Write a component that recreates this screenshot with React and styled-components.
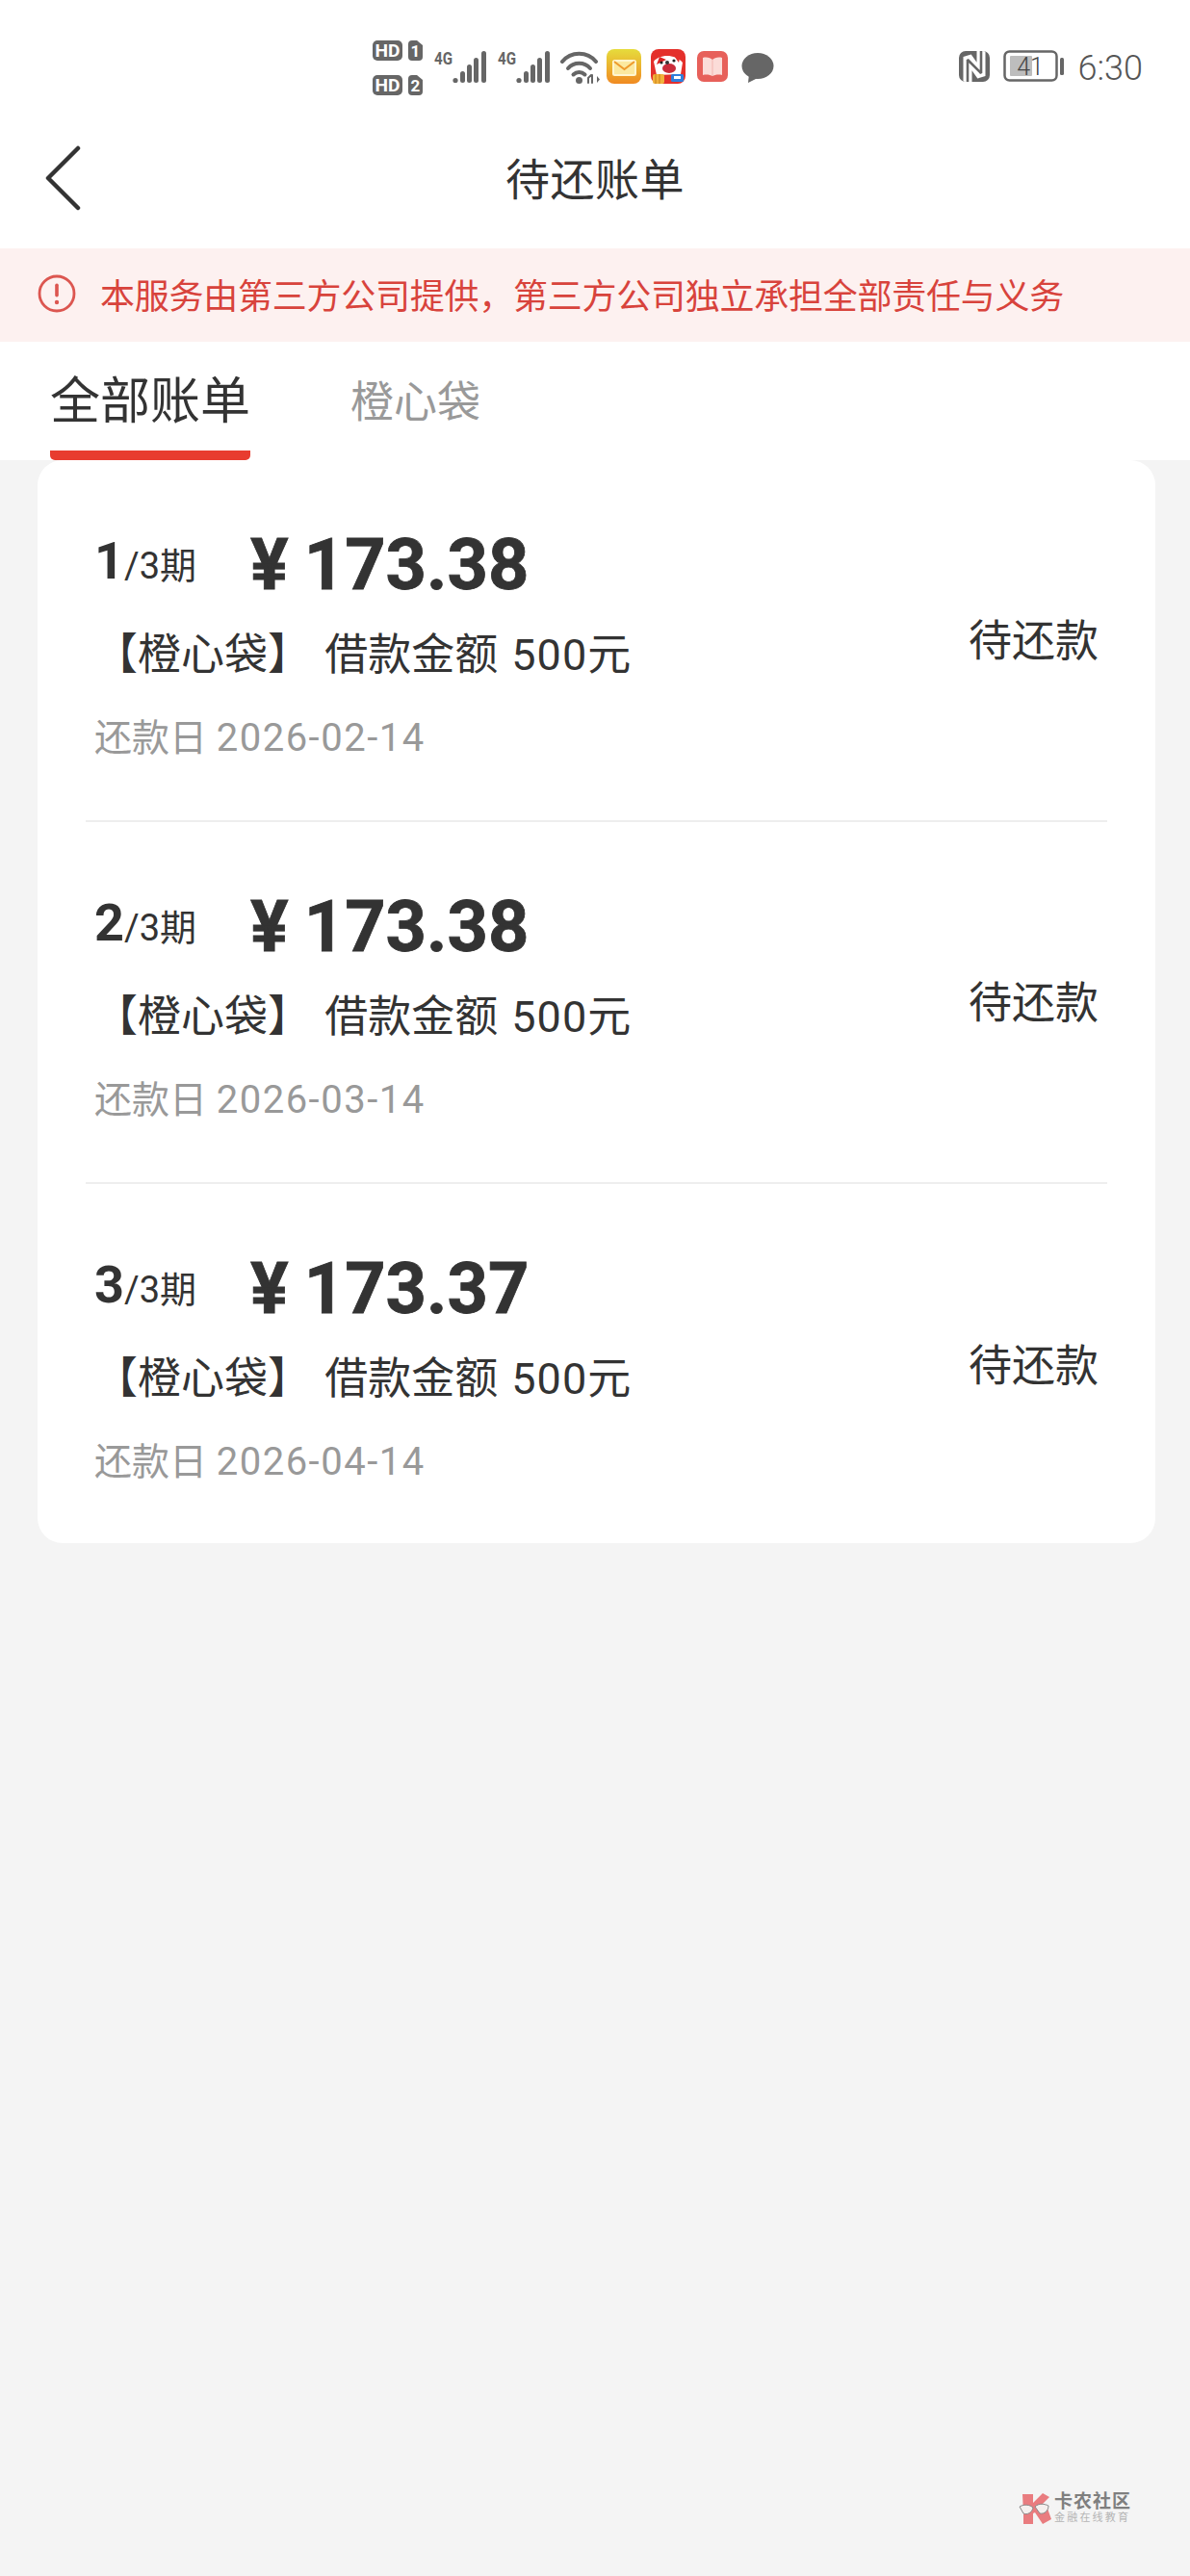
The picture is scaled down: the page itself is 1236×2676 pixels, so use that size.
import React from "react";
import styled, { createGlobalStyle } from "styled-components";

const Global = createGlobalStyle`
  html, body { margin: 0; padding: 0; background: #f4f4f4; }
  #root { min-height: 2676px; }
  * { box-sizing: border-box; }
`;

const FONT = `Roboto, "Noto Sans CJK SC", sans-serif`;

const Page = styled.div`
  position: relative;
  width: 1236px;
  height: 2676px;
  background: #f4f4f4;
  font-family: ${FONT};
  color: #333;
  overflow: hidden;
`;

const StatusBar = styled.div`
  height: 125px;
  background: #fff;
  display: flex;
  align-items: flex-start;
  padding: 42px 49px 0 387px;
`;
const StatusIcons = styled.div`
  display: flex;
  align-items: flex-start;
  flex: 1;
`;
const StatusRight = styled.div`
  display: flex;
  align-items: flex-start;
`;
const Slot = styled.div`
  flex: none;
  margin-left: ${(p) => p.$ml || 0}px;
  margin-top: ${(p) => p.$mt || 0}px;
  line-height: 0;
`;
const Clock = styled.div`
  margin-left: 15px;
  margin-top: 8px;
  font-size: 36px;
  line-height: 42px;
  font-weight: 300;
  color: #555;
`;

const Nav = styled.div`
  height: 133px;
  background: #fff;
  display: flex;
  align-items: center;
  justify-content: center;
  position: relative;
`;
const Back = styled.div`
  position: absolute;
  left: 47px;
  top: 26px;
  line-height: 0;
`;
const Title = styled.div`
  font-size: 46px;
  line-height: 60px;
  letter-spacing: 0.5px;
  margin-top: -9px;
  color: #333;
`;

const Banner = styled.div`
  height: 97px;
  background: #fdf1f0;
  display: flex;
  align-items: center;
  padding: 0 0 3px 39px;
  color: #d8433c;
  font-size: 36px;
  letter-spacing: -0.25px;
  gap: 25px;
`;
const BannerIcon = styled.div`
  line-height: 0;
  flex: none;
`;

const Tabs = styled.div`
  height: 123px;
  background: #fff;
  display: flex;
  align-items: flex-start;
  padding-left: 52px;
`;
const Tab = styled.div`
  height: 123px;
  width: ${(p) => (p.$active ? "208px" : "auto")};
  margin-left: ${(p) => (p.$active ? 0 : "104px")};
  padding-top: ${(p) => (p.$active ? "28px" : "34px")};
  font-size: ${(p) => (p.$active ? "52px" : "45px")};
  line-height: ${(p) => (p.$active ? "70px" : "60px")};
  color: ${(p) => (p.$active ? "#333" : "#999")};
  border-bottom: ${(p) => (p.$active ? "10px solid #e83c2f" : "none")};
  border-radius: 0 0 5px 5px;
  white-space: nowrap;
`;

const Card = styled.div`
  margin: 0 36px 0 39px;
  background: #fff;
  border-radius: 26px;
  padding: 0 50px;
  height: 1125px;
`;
const Row = styled.div`
  height: 376px;
  display: flex;
  align-items: center;
  justify-content: space-between;
  padding: 0 9px 0 9px;
  border-bottom: ${(p) => (p.$last ? "none" : "2px solid #eeeeee")};
`;
const Info = styled.div`
  display: flex;
  flex-direction: column;
  height: 100%;
  padding-top: 72px;
`;
const AmountLine = styled.div`
  display: flex;
  align-items: center;
  height: 74px;
`;
const Period = styled.div`
  display: flex;
  align-items: baseline;
  width: 162px;
  line-height: 60px;
  margin-top: -3px;
`;
const PeriodNo = styled.span`
  font-size: 54px;
  font-weight: 700;
`;
const PeriodOf = styled.span`
  font-size: 38px;
  white-space: nowrap;
`;
const Money = styled.div`
  display: flex;
  align-items: baseline;
  line-height: 74px;
  font-size: 74px;
  font-weight: 700;
  -webkit-text-stroke: 0.8px #333;
`;
const Yen = styled.span`
  margin-right: 16px;
`;
const NameLine = styled.div`
  margin-top: 27px;
  height: 60px;
  line-height: 60px;
  font-size: 45px;
  word-spacing: 3px;
  white-space: nowrap;
`;
const Num = styled.span`
  letter-spacing: 1px;
`;
const DateLine = styled.div`
  margin-top: 31px;
  height: 50px;
  line-height: 50px;
  font-size: 39px;
  color: #999;
  white-space: nowrap;
`;
const DateValue = styled.span`
  font-size: 40px;
  letter-spacing: 1.5px;
`;
const State = styled.div`
  font-size: 45px;
  line-height: 60px;
  margin-top: 4px;
  color: #333;
  white-space: nowrap;
`;

const Watermark = styled.div`
  position: absolute;
  left: 1058px;
  top: 2588px;
  display: flex;
  align-items: center;
  gap: 3px;
  opacity: 0.85;
`;
const MarkText = styled.div`
  display: flex;
  flex-direction: column;
  color: #6b6b6b;
`;
const MarkTitle = styled.div`
  font-size: 19px;
  line-height: 21px;
  font-weight: 700;
  letter-spacing: 1px;
  white-space: nowrap;
`;
const MarkSub = styled.div`
  font-size: 11px;
  line-height: 14px;
  letter-spacing: 2.2px;
  color: #aaa;
  white-space: nowrap;
`;

const GREY = "#666";

const Sim = ({ n }) => (
  <svg width="52" height="21" viewBox="0 0 52 21">
    <rect x="0" y="0" width="31" height="21" rx="5" fill={GREY} />
    <text x="2.5" y="17" fontFamily="Roboto" fontWeight="700" fontSize="19" fill="#fff" textLength="26" lengthAdjust="spacingAndGlyphs">HD</text>
    <path d="M37 4 a4 4 0 0 1 4 -4 H46 L52 5 V17 a4 4 0 0 1 -4 4 H41 a4 4 0 0 1 -4 -4 Z" fill={GREY} />
    <text x="44.5" y="17" textAnchor="middle" fontFamily="Roboto" fontWeight="700" fontSize="17" fill="#fff">{n}</text>
  </svg>
);

const Signal = () => (
  <svg width="54" height="40" viewBox="0 -5 54 40">
    <text x="0" y="15" fontFamily="Roboto" fontWeight="700" fontSize="19" fill={GREY} textLength="19" lengthAdjust="spacingAndGlyphs">4G</text>
    <circle cx="22" cy="31.5" r="2.6" fill={GREY} />
    <rect x="27" y="22" width="5" height="12" rx="2.5" fill={GREY} />
    <rect x="34" y="15" width="5" height="19" rx="2.5" fill={GREY} />
    <rect x="41" y="8" width="5" height="26" rx="2.5" fill={GREY} />
    <rect x="49" y="1" width="5" height="33" rx="2.5" fill={GREY} />
  </svg>
);

const Wifi = () => (
  <svg width="42" height="36" viewBox="0 0 42 36" fill="none" stroke={GREY} strokeWidth="4" strokeLinecap="round">
    <path d="M2 12 C11 1 28 1 37 12" />
    <path d="M8 19 C14 12 25 12 31 19" />
    <path d="M13.5 25.5 C17 22 22 22 25.5 25.5" />
    <circle cx="19.5" cy="31.5" r="3.5" fill={GREY} stroke="none" />
    <path d="M29 34 L29 29 L32 26 M33 26 V34" strokeWidth="2" />
    <path d="M38 27 L41 30.5 L38 34 Z" fill={GREY} stroke="none" />
  </svg>
);

const MailApp = () => (
  <svg width="36" height="36" viewBox="0 0 36 36">
    <defs>
      <linearGradient id="mailg" x1="0" y1="0" x2="0" y2="1">
        <stop offset="0" stopColor="#e6dc3c" />
        <stop offset="1" stopColor="#f08a22" />
      </linearGradient>
    </defs>
    <rect width="36" height="36" rx="8" fill="url(#mailg)" />
    <rect x="7" y="12" width="23" height="15" rx="1.5" fill="#fbe9a0" stroke="#fff6d0" strokeWidth="2" />
    <path d="M8 13 L18.5 21 L29 13" fill="none" stroke="#ee9a2c" strokeWidth="2" />
  </svg>
);

const JdApp = () => (
  <svg width="36" height="36" viewBox="0 0 36 36">
    <rect width="36" height="36" rx="8" fill="#e4302b" />
    <path d="M3 13 C8 6 24 4 33 14 L31 26 L6 27 Z" fill="#fff" />
    <path d="M9 8 L16 11 L6 16 Z" fill="#d22" />
    <path d="M24 7 L31 5 L29 14 Z" fill="#e4302b" />
    <ellipse cx="19" cy="20" rx="7" ry="5" fill="#c92c3a" />
    <circle cx="11" cy="14" r="1.6" fill="#222" />
    <circle cx="24" cy="12" r="1.6" fill="#222" />
    <circle cx="17" cy="14" r="2" fill="#333" />
    <rect x="2" y="26" width="12" height="10" rx="2" fill="#f1b23c" />
    <path d="M5 26 V36 M9 26 V36" stroke="#c77e1a" strokeWidth="1" />
    <rect x="21" y="26" width="13" height="8" rx="1.5" fill="#2f7fdc" />
    <rect x="24" y="28" width="7" height="3" fill="#fff" />
  </svg>
);

const BookApp = () => (
  <svg width="32" height="32" viewBox="0 0 32 32">
    <rect width="32" height="32" rx="7" fill="#e7605a" />
    <path d="M6 7 C10 6 14 7 16 9 C18 7 22 6 26 7 V25 C22 24 18 25 16 26 C14 25 10 24 6 25 Z" fill="#fbdcd8" />
    <path d="M16 9 V26" stroke="#f3b5af" strokeWidth="1" />
  </svg>
);

const Bubble = () => (
  <svg width="34" height="31" viewBox="0 0 34 31">
    <ellipse cx="17" cy="13.5" rx="16.5" ry="13.5" fill={GREY} />
    <path d="M8 22 L7 31 L17 26 Z" fill={GREY} />
  </svg>
);

const Nfc = () => (
  <svg width="32" height="32" viewBox="0 0 32 32">
    <defs>
      <clipPath id="nfcclip"><rect width="32" height="32" rx="7" /></clipPath>
    </defs>
    <g clipPath="url(#nfcclip)">
      <rect width="32" height="32" fill={GREY} />
      <path d="M9 34 V6 L23 26 V-2" fill="none" stroke="#fff" strokeWidth="9" strokeLinejoin="bevel" />
      <path d="M9 32 V9 L23 23 V0" fill="none" stroke={GREY} strokeWidth="2.6" strokeLinejoin="bevel" />
    </g>
  </svg>
);

const Battery = () => (
  <svg width="63" height="34" viewBox="0 0 63 34">
    <rect x="1.5" y="1.5" width="54" height="30" rx="5" fill="none" stroke={GREY} strokeWidth="2.5" />
    <rect x="7" y="6" width="23" height="21" rx="1" fill="#bdbdbd" />
    <rect x="59" y="8" width="4" height="18" rx="1.5" fill={GREY} />
    <text x="28" y="26" textAnchor="middle" fontFamily="Roboto" fontWeight="300" fontSize="25" fill="#444">41</text>
  </svg>
);

const Chevron = () => (
  <svg width="38" height="68" viewBox="0 0 38 68" fill="none" stroke="#333" strokeWidth="4.5" strokeLinecap="round" strokeLinejoin="round">
    <path d="M34 3 L3 34 L34 65" />
  </svg>
);

const Alert = () => (
  <svg width="40" height="40" viewBox="0 0 40 40">
    <circle cx="20" cy="20" r="18" fill="none" stroke="#dc5650" strokeWidth="2.8" />
    <rect x="18.2" y="9.5" width="3.6" height="14" rx="1.8" fill="#dc5650" />
    <circle cx="20" cy="29" r="2.2" fill="#dc5650" />
  </svg>
);

const Mark = () => (
  <svg width="34" height="34" viewBox="0 0 34 34">
    <path d="M4 2 H15 V11 L25 1 L32 5 L24 13 L30 17 L34 28 L25 33 L17 21 L15 22 V33 H5 V22 Z" fill="#e8686b" />
    <path d="M1 15 C6 12 12 13 15 16 C14 21 9 24 5 22 Z" fill="#f6f0ee" stroke="#777" strokeWidth="1" />
    <path d="M17 15 C21 11 27 12 31 14 C31 19 27 23 22 22 Z" fill="#f6f0ee" stroke="#777" strokeWidth="1" />
  </svg>
);

const bills = [
  { no: 1, amount: "173.38", date: "2026-02-14" },
  { no: 2, amount: "173.38", date: "2026-03-14" },
  { no: 3, amount: "173.37", date: "2026-04-14" },
];

export default function App() {
  return (
    <Page>
      <Global />
      <StatusBar>
        <StatusIcons>
          <Slot>
            <Sim n="1" />
            <Slot $mt={15}><Sim n="2" /></Slot>
          </Slot>
          <Slot $ml={12} $mt={5}><Signal /></Slot>
          <Slot $ml={12} $mt={5}><Signal /></Slot>
          <Slot $ml={11} $mt={10}><Wifi /></Slot>
          <Slot $ml={6} $mt={9}><MailApp /></Slot>
          <Slot $ml={10} $mt={9}><JdApp /></Slot>
          <Slot $ml={12} $mt={11}><BookApp /></Slot>
          <Slot $ml={14} $mt={13}><Bubble /></Slot>
        </StatusIcons>
        <StatusRight>
          <Slot $mt={11}><Nfc /></Slot>
          <Slot $ml={14} $mt={10}><Battery /></Slot>
          <Clock>6:30</Clock>
        </StatusRight>
      </StatusBar>
      <Nav>
        <Back><Chevron /></Back>
        <Title>待还账单</Title>
      </Nav>
      <Banner>
        <BannerIcon><Alert /></BannerIcon>
        <span>本服务由第三方公司提供，第三方公司独立承担全部责任与义务</span>
      </Banner>
      <Tabs>
        <Tab $active>全部账单</Tab>
        <Tab>橙心袋</Tab>
      </Tabs>
      <Card>
        {bills.map((b, i) => (
          <Row key={b.no} $last={i === bills.length - 1}>
            <Info>
              <AmountLine>
                <Period>
                  <PeriodNo>{b.no}</PeriodNo>
                  <PeriodOf>/3期</PeriodOf>
                </Period>
                <Money>
                  <Yen>¥</Yen>
                  <span>{b.amount}</span>
                </Money>
              </AmountLine>
              <NameLine>【橙心袋】 借款金额 <Num>500</Num>元</NameLine>
              <DateLine>还款日 <DateValue>{b.date}</DateValue></DateLine>
            </Info>
            <State>待还款</State>
          </Row>
        ))}
      </Card>
      <Watermark>
        <Mark />
        <MarkText>
          <MarkTitle>卡农社区</MarkTitle>
          <MarkSub>金融在线教育</MarkSub>
        </MarkText>
      </Watermark>
    </Page>
  );
}
